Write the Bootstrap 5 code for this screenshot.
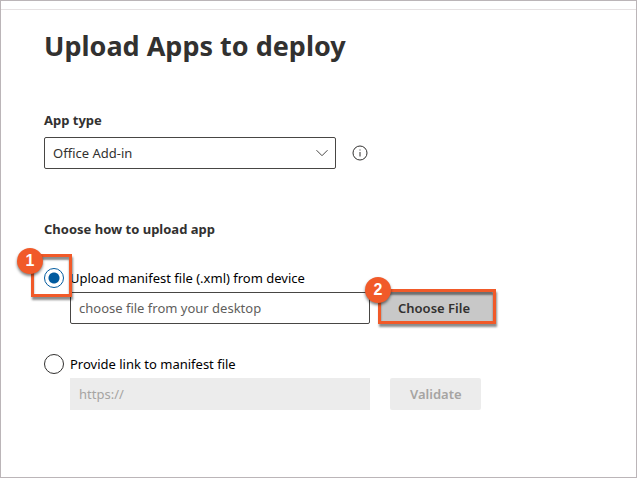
<!DOCTYPE html>
<html lang="en">
<head>
<meta charset="utf-8">
<meta name="viewport" content="width=device-width, initial-scale=1">
<title>Upload Apps to deploy</title>
<link href="https://cdn.jsdelivr.net/npm/bootstrap@5.3.0/dist/css/bootstrap.min.css" rel="stylesheet">
<style>
  body { font-family: "Noto Sans", "Open Sans", sans-serif; font-size: 13px; line-height: 20px; color: #323130; }
  .panel-frame { border: 1px solid #bbb5b8; padding-top: 8px; }
  .top-rule { border-top: 1px solid #e6e2e3; }
  .panel-body { padding: 18px 44px 24px 43px; }
  .page-title { font-size: 27px; line-height: 36px; font-weight: 700; margin-bottom: 46px; }
  .group-title { font-size: 13px; line-height: 20px; font-weight: 700; margin-bottom: 7px; }
  .field-box { height: 32px; padding: 0 8px; font-size: 13px; line-height: 20px; border: 1px solid #484644; border-radius: 2px; color: #323130; }
  .type-select { flex: 0 1 292px; background-image: url("data:image/svg+xml,%3Csvg xmlns='http://www.w3.org/2000/svg' viewBox='0 0 12 12'%3E%3Cpath d='M.5 3.2 6 8.7l5.5-5.5' fill='none' stroke='%23484644'/%3E%3C/svg%3E"); background-size: 12px 12px; background-position: right 7px center; }
  .info-btn { margin-left: 16px; line-height: 0; color: #323130; }
  .app-type { margin-bottom: 50px; }
  .option-label { color: #000; }
  .option-radio { width: 20px; height: 20px; appearance: none; border: 1px solid #323130; border-radius: 50%; background: #fff; margin: 0 6px 0 0; flex: none; }
  .option-radio:checked { border-color: #005a9e; background: radial-gradient(circle, #005a9e 5px, #fff 6px); }
  .option-fields { padding-left: 26px; gap: 20px; }
  .path-field { flex: 0 1 300px; min-width: 0; }
  .first-option { margin-top: 29px; margin-bottom: 30px; }
  .first-option .option-fields { margin-top: 4px; gap: 8px; }
  .second-option .option-fields { margin-top: 4px; }
  .path-field::placeholder { color: #605e5c; opacity: 1; }
  .path-field:disabled { background: #ececec; border-color: #ececec; border-radius: 0; }
  .path-field:disabled::placeholder { color: #a6a4a2; }
  .action-btn { height: 32px; padding: 0 20px; font-size: 13px; line-height: 20px; font-weight: 600; border: 0; border-radius: 2px; white-space: nowrap; }
  .choose-btn { width: 112px; padding: 0 20px 0 17px; margin: 0 3px; text-align: left; background: #c8c8c8; color: #323130; }
  .validate-btn, .validate-btn:disabled { width: 91px; background: #ececec; color: #a6a4a2; opacity: 1; }
  /* Numbered step markers laid over the controls */
  .step-outline { position: absolute; border: 3px solid #f15a29; box-shadow: 1px 3px 2px rgba(0,0,0,.45), inset 0 3px 2px rgba(0,0,0,.45); pointer-events: none; }
  .step-number { position: absolute; width: 26px; height: 26px; border-radius: 50%; background: #f15a29; color: #fff; font: 700 16px/26px "Liberation Sans", sans-serif; text-align: center; box-shadow: 0 2px 3px rgba(0,0,0,.5); pointer-events: none; }
  .radio-outline { left: -13px; top: -14px; width: 41px; height: 43px; }
  .radio-number { left: -27px; top: -20px; }
  .file-outline { left: 0; right: 0; top: -3px; bottom: 0; }
  .file-number { left: -13px; top: -15px; }
</style>
</head>
<body>
<main class="panel-frame min-vh-100">
  <div class="top-rule"></div>
  <form class="panel-body">
    <h1 class="page-title">Upload Apps to deploy</h1>
    <section class="app-type">
      <label class="group-title d-block" for="appType">App type</label>
      <div class="d-flex align-items-center">
        <select class="form-select field-box type-select" id="appType"><option>Office Add-in</option></select>
        <button type="button" class="btn border-0 p-0 info-btn" aria-label="About app types">
          <svg width="16" height="16" viewBox="0 0 16 16" fill="none" stroke="currentColor"><circle cx="8" cy="8" r="7"/><path d="M8 7v4.5M8 4.5v1"/></svg>
        </button>
      </div>
    </section>
    <section role="radiogroup" aria-labelledby="uploadTitle">
      <h2 class="group-title" id="uploadTitle">Choose how to upload app</h2>
      <div class="first-option">
        <div class="d-flex align-items-center position-relative">
          <input class="option-radio" type="radio" name="source" id="fromDevice" checked>
          <label class="option-label" for="fromDevice">Upload manifest file (.xml) from device</label>
          <span class="step-outline radio-outline"></span>
          <span class="step-number radio-number">1</span>
        </div>
        <div class="d-flex option-fields">
          <input class="form-control field-box path-field" type="text" placeholder="choose file from your desktop" aria-label="Manifest file">
          <div class="position-relative">
            <button type="button" class="btn action-btn choose-btn">Choose File</button>
            <span class="step-outline file-outline"></span>
            <span class="step-number file-number">2</span>
          </div>
        </div>
      </div>
      <div class="second-option">
        <div class="d-flex align-items-center">
          <input class="option-radio" type="radio" name="source" id="fromLink">
          <label class="option-label" for="fromLink">Provide link to manifest file</label>
        </div>
        <div class="d-flex option-fields">
          <input class="form-control field-box path-field" type="url" placeholder="https://" aria-label="Manifest link" disabled>
          <button type="button" class="btn action-btn validate-btn" disabled>Validate</button>
        </div>
      </div>
    </section>
  </form>
</main>
<script src="https://cdn.jsdelivr.net/npm/bootstrap@5.3.0/dist/js/bootstrap.bundle.min.js"></script>
</body>
</html>
